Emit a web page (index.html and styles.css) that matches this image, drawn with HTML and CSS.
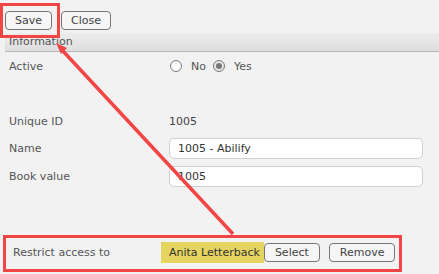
FILE: index.html
```html
<!DOCTYPE html>
<html>
<head>
<meta charset="utf-8">
<link rel="stylesheet" href="styles.css">
</head>
<body>
<div class="page">
  <div class="toolbar">
    <button class="btn">Save</button>
    <button class="btn">Close</button>
  </div>
  <div class="form">
    <div class="section-head">Information</div>
    <div class="rows">
      <div class="row row-active">
        <div class="label">Active</div>
        <div class="value radios">
          <span class="radio"></span><span class="rlabel">No</span>
          <span class="radio checked"></span><span class="rlabel">Yes</span>
        </div>
      </div>
      <div class="row row-id">
        <div class="label">Unique ID</div>
        <div class="value">1005</div>
      </div>
      <div class="row row-field">
        <div class="label">Name</div>
        <div class="value"><div class="input">1005 - Abilify</div></div>
      </div>
      <div class="row row-field">
        <div class="label">Book value</div>
        <div class="value"><div class="input">1005</div></div>
      </div>
      <div class="row row-restrict">
        <div class="label">Restrict access to</div>
        <div class="value restrict">
          <span class="tag">Anita Letterback</span>
          <button class="btn small">Select</button>
          <button class="btn small remove">Remove</button>
        </div>
      </div>
    </div>
  </div>
  <svg class="annot" width="439" height="274" viewBox="0 0 439 274">
    <rect x="1.5" y="4.5" width="57" height="32" fill="none" stroke="#f24545" stroke-width="3"/>
    <rect x="4.5" y="236.5" width="396" height="34" fill="none" stroke="#f24545" stroke-width="3"/>
    <line x1="233" y1="234" x2="62" y2="50" stroke="#f24545" stroke-width="3.5"/>
    <polygon points="56,43 67,48 61,54" fill="#f24545"/>
  </svg>
</div>
</body>
</html>
```
FILE: styles.css
```css
html, body {
  margin: 0;
  padding: 0;
  background: #ffffff;
}
.page {
  position: relative;
  width: 439px;
  height: 274px;
  overflow: hidden;
  font-family: "DejaVu Sans", Verdana, sans-serif;
  font-size: 11px;
  color: #444;
  background: #f2f2f2;
}
.toolbar {
  height: 33px;
  box-sizing: border-box;
  padding: 11px 0 0 5px;
  display: flex;
  gap: 9px;
  align-items: flex-start;
}
.btn {
  font-family: "DejaVu Sans", Verdana, sans-serif;
  font-size: 11px;
  color: #444;
  background: #f6f6f6;
  border: 1px solid #777;
  border-radius: 4px;
  height: 19px;
  padding: 0 9px;
  margin: 0;
  line-height: 17px;
}
.form {
  margin-left: 5px;
  background: #f2f2f2;
  height: 241px;
}
.section-head {
  height: 18px;
  line-height: 18px;
  padding-left: 4px;
  color: #555;
  background: linear-gradient(#ececec, #dedede);
  border-bottom: 1px solid #b9b9b9;
}
.rows {
  display: flex;
  flex-direction: column;
}
.row {
  display: grid;
  grid-template-columns: 160px 254px;
  align-items: center;
  padding-left: 4px;
}
.row-active {
  height: 28px;
}
.row-id {
  margin-top: 28px;
  height: 26px;
}
.row-field {
  height: 28px;
}
.label {
  color: #555;
}
.radios {
  display: flex;
  align-items: center;
}
.radio {
  width: 12px;
  height: 12px;
  border: 1px solid #777;
  border-radius: 50%;
  background: #fff;
  box-sizing: border-box;
  position: relative;
  margin-left: 1px;
}
.radio.checked::after {
  content: "";
  position: absolute;
  left: 2px;
  top: 2px;
  width: 6px;
  height: 6px;
  border-radius: 50%;
  background: #777;
}
.radio.checked {
  background: #e8e8e8;
}
.rlabel {
  margin-left: 9px;
  margin-right: 6px;
  color: #555;
}
.input {
  height: 21px;
  box-sizing: border-box;
  border: 1px solid #cfcfcf;
  border-radius: 5px;
  background: #fff;
  padding-left: 8px;
  line-height: 19px;
  color: #333;
}
.row-restrict {
  margin-top: 51px;
  padding-left: 8px;
  grid-template-columns: 148px auto;
  height: 22px;
}
.restrict {
  display: flex;
  align-items: center;
}
.tag {
  background: #e6d461;
  color: #333;
  height: 21px;
  line-height: 21px;
  padding: 0 4px 0 8px;
}
.btn.small {
  height: 19px;
  padding: 0 10px;
}
.remove {
  margin-left: 9px;
  padding: 0 11px;
}
.annot {
  position: absolute;
  left: 0;
  top: 0;
  pointer-events: none;
}
```
